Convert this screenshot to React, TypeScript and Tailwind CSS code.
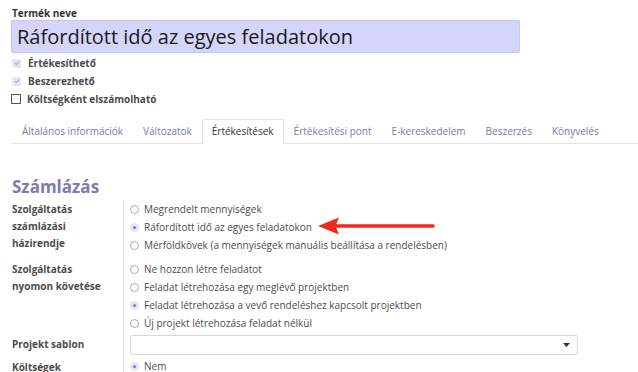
import React from "react";

const tabs = [
  "Általános információk",
  "Változatok",
  "Értékesítések",
  "Értékesítési pont",
  "E-kereskedelem",
  "Beszerzés",
  "Könyvelés",
];

function Check({ checked }: { checked: boolean }) {
  if (checked) {
    return (
      <span className="w-[9px] h-[9px] rounded-[2px] bg-[#e4e4f4] flex items-center justify-center">
        <svg width="6" height="6" viewBox="0 0 6 6">
          <path d="M1 3.2 L2.4 4.5 L5 1.5" stroke="#8a88c0" strokeWidth="1" fill="none" />
        </svg>
      </span>
    );
  }
  return <span className="w-[10px] h-[10px] border border-[#555] bg-white" />;
}

function Radio({ checked, label }: { checked?: boolean; label: string }) {
  return (
    <div className="flex items-center gap-[5px] h-[18px]">
      {checked ? (
        <span className="w-[9px] h-[9px] rounded-full bg-[#e4e4f4] flex items-center justify-center">
          <span className="w-[3px] h-[3px] rounded-full bg-[#7c7ab8]" />
        </span>
      ) : (
        <span className="w-[9px] h-[9px] rounded-full border border-[#aaa] bg-white" />
      )}
      <span>{label}</span>
    </div>
  );
}

export default function App() {
  return (
    <div
      className="relative w-[638px] h-[372px] overflow-hidden bg-white text-[#4c4c4c] text-[10px]"
      style={{ fontFamily: '"Open Sans", "DejaVu Sans", sans-serif' }}
    >
      <div className="pl-[12px] pt-[7px]">
        <div className="font-bold text-[10px] leading-[12px] text-[#333]">Termék neve</div>
        <div className="ml-[-1px] mt-[1px] w-[509px] h-[33px] bg-[#d5d5fb] border border-[#c8c8e8] rounded-[2px] pl-[5px] flex items-center text-[20px] text-[#1a1a1a]">
          Ráfordított idő az egyes feladatokon
        </div>

        <div className="mt-[1px] flex flex-col">
          <div className="flex items-center gap-[7px] h-[18px] font-bold">
            <Check checked />
            <span>Értékesíthető</span>
          </div>
          <div className="flex items-center gap-[7px] h-[18px] font-bold">
            <Check checked />
            <span>Beszerezhető</span>
          </div>
          <div className="flex items-center gap-[6px] h-[18px] font-bold ml-[-1px]">
            <Check checked={false} />
            <span>Költségként elszámolható</span>
          </div>
        </div>

        <div className="mt-[11px] flex border-b border-[#e2e2e2] h-[25px] items-end">
          {tabs.map((t) =>
            t === "Értékesítések" ? (
              <div
                key={t}
                className="px-[9px] h-[25px] mb-[-1px] flex items-center bg-white border border-[#e2e2e2] border-b-white rounded-t-[2px] text-[#333]"
              >
                {t}
              </div>
            ) : (
              <div key={t} className="px-[10px] h-[24px] flex items-center text-[#7a78b0]">
                {t}
              </div>
            )
          )}
        </div>

        <div className="mt-[33px] text-[17px] font-bold text-[#7d7bb0] leading-[20px]">Számlázás</div>

        <div className="mt-[3px] grid grid-cols-[111px_1fr]">
          <div className="font-bold leading-[17px] pt-[1px]">
            Szolgáltatás
            <br />
            számlázási
            <br />
            házirendje
          </div>
          <div className="border-l border-[#e6e6e6] pl-[6px] pb-[6px]">
            <Radio label="Megrendelt mennyiségek" />
            <Radio checked label="Ráfordított idő az egyes feladatokon" />
            <Radio label="Mérföldkövek (a mennyiségek manuális beállítása a rendelésben)" />
          </div>

          <div className="font-bold leading-[17px] pt-[1px]">
            Szolgáltatás
            <br />
            nyomon követése
          </div>
          <div className="border-l border-[#e6e6e6] pl-[6px]">
            <Radio label="Ne hozzon létre feladatot" />
            <Radio label="Feladat létrehozása egy meglévő projektben" />
            <Radio checked label="Feladat létrehozása a vevő rendeléshez kapcsolt projektben" />
            <Radio label="Új projekt létrehozása feladat nélkül" />
          </div>

          <div className="font-bold flex items-center h-[25px]">Projekt sablon</div>
          <div className="border-l border-[#e6e6e6] pl-[6px] flex items-center h-[25px]">
            <div className="w-[448px] h-[20px] border border-[#d9d9d9] rounded-[2px] flex items-center justify-end pr-[7px]">
              <svg width="7" height="4" viewBox="0 0 7 4">
                <path d="M0 0 L7 0 L3.5 4 Z" fill="#333" />
              </svg>
            </div>
          </div>

          <div className="font-bold flex items-center h-[20px]">Költségek</div>
          <div className="border-l border-[#e6e6e6] pl-[6px] h-[20px]">
            <Radio checked label="Nem" />
          </div>
        </div>
      </div>

      <svg className="absolute left-[316px] top-[216px]" width="120" height="20" viewBox="0 0 120 20">
        <path d="M18 10 L117 10" stroke="#f0281e" strokeWidth="3.5" strokeLinecap="round" />
        <path d="M2 10 L23 1.5 L19.5 10 L23 18.5 Z" fill="#f0281e" />
      </svg>
    </div>
  );
}
